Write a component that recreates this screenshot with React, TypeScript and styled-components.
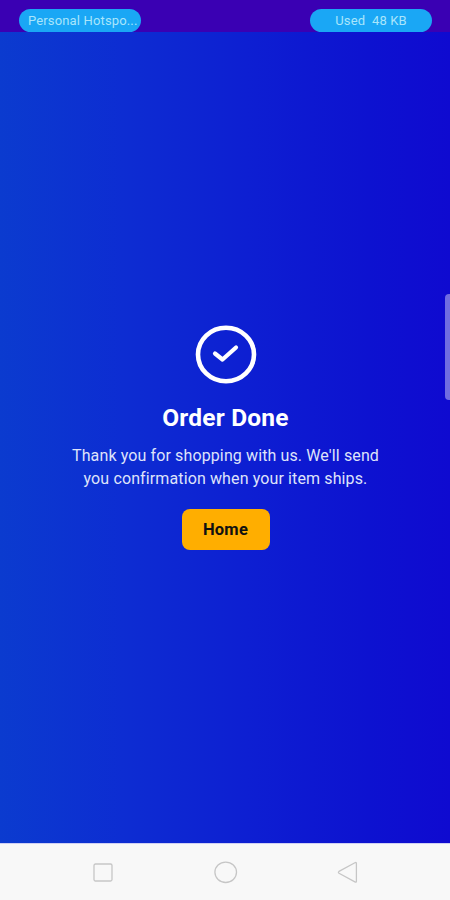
import React from "react";
import styled, { createGlobalStyle } from "styled-components";

const GlobalStyle = createGlobalStyle`
  * { box-sizing: border-box; }
  body { margin: 0; font-family: Roboto, "Liberation Sans", sans-serif; }
`;

const Screen = styled.div`
  width: 450px;
  height: 900px;
  display: flex;
  flex-direction: column;
  overflow: hidden;
  position: relative;
`;

const StatusBar = styled.header`
  height: 32px;
  flex: none;
  display: flex;
  justify-content: space-between;
  padding: 9px 18px 0 19px;
  background: #3a00b3;
`;

const Pill = styled.div<{ $align: "flex-start" | "center" }>`
  width: 122px;
  height: 23px;
  border-radius: 12px;
  padding: 0 0 0 ${(p) => (p.$align === "center" ? 0 : 9)}px;
  display: flex;
  align-items: center;
  justify-content: ${(p) => p.$align};
  background: #1aa7f5;
  color: #a9e5fb;
  font-size: 13px;
  letter-spacing: 0.15px;
  white-space: pre;
`;

const Content = styled.main`
  height: 811px;
  flex: none;
  display: flex;
  flex-direction: column;
  align-items: center;
  padding: 293px 0 0 1px;
  color: #fff;
  background: linear-gradient(90deg, #0b3bcf 0%, #0d2dd2 27%, #0d1fd2 55%, #0d12d0 82%, #0f0ad0 100%);
`;

const DoneIcon = styled.svg`
  display: block;
  width: 62px;
  height: 60px;
`;

const Title = styled.h1`
  margin: 17px 0 0;
  font-size: 24.5px;
  line-height: 32px;
  font-weight: 700;
  letter-spacing: 0.2px;
`;

const Message = styled.p`
  margin: 10px 0 0;
  font-size: 16px;
  line-height: 23px;
  letter-spacing: 0.12px;
  text-align: center;
  color: #dfe3fa;
`;

const HomeButton = styled.button`
  width: 88px;
  height: 41px;
  margin-top: 19px;
  padding: 0;
  border: 0;
  border-radius: 8px;
  background: #ffae00;
  color: #111;
  font: 700 16.5px/41px Roboto, sans-serif;
  letter-spacing: 0.25px;
`;

const EdgeHandle = styled.div`
  position: absolute;
  right: 0;
  top: 294px;
  width: 5px;
  height: 106px;
  border-radius: 4px 0 0 4px;
  background: #706de1;
`;

const NavBar = styled.nav`
  flex: 1;
  display: flex;
  align-items: flex-start;
  justify-content: space-between;
  padding: 16px 89px 0 90px;
  background: #f8f8f8;
  border-top: 1px solid #cfd0f4;
`;

const NavIcon = styled.svg`
  width: 26px;
  height: 26px;
  fill: none;
  stroke: #c6c6c6;
  stroke-width: 1.3;
  stroke-linejoin: round;
`;

export default function App() {
  return (
    <Screen>
      <GlobalStyle />
      <StatusBar>
        <Pill $align="flex-start">Personal Hotspo...</Pill>
        <Pill $align="center">{"Used  48 KB"}</Pill>
      </StatusBar>
      <Content>
        <DoneIcon viewBox="0 0 62 60" fill="none" stroke="#fff" strokeLinecap="round" strokeLinejoin="round">
          <ellipse cx="31" cy="29.5" rx="28" ry="26.8" strokeWidth="4.6" />
          <path d="M20 28.5 L27.5 34.5 L41 22.5" strokeWidth="4.2" />
        </DoneIcon>
        <Title>Order Done</Title>
        <Message>
          Thank you for shopping with us. We'll send
          <br />
          you confirmation when your item ships.
        </Message>
        <HomeButton>Home</HomeButton>
      </Content>
      <NavBar>
        <NavIcon viewBox="0 0 26 26">
          <rect x="4" y="4" width="18" height="17" rx="1.5" />
        </NavIcon>
        <NavIcon viewBox="0 0 26 26">
          <ellipse cx="12.7" cy="12.3" rx="10.8" ry="10.2" />
        </NavIcon>
        <NavIcon viewBox="0 0 26 26">
          <path d="M21.4 3.5 V21.2 Q21.4 22.7 19.9 21.9 L4 13.2 Q2.8 12.3 4 11.4 L19.9 2.8 Q21.4 2 21.4 3.5 Z" />
        </NavIcon>
      </NavBar>
      <EdgeHandle />
    </Screen>
  );
}
